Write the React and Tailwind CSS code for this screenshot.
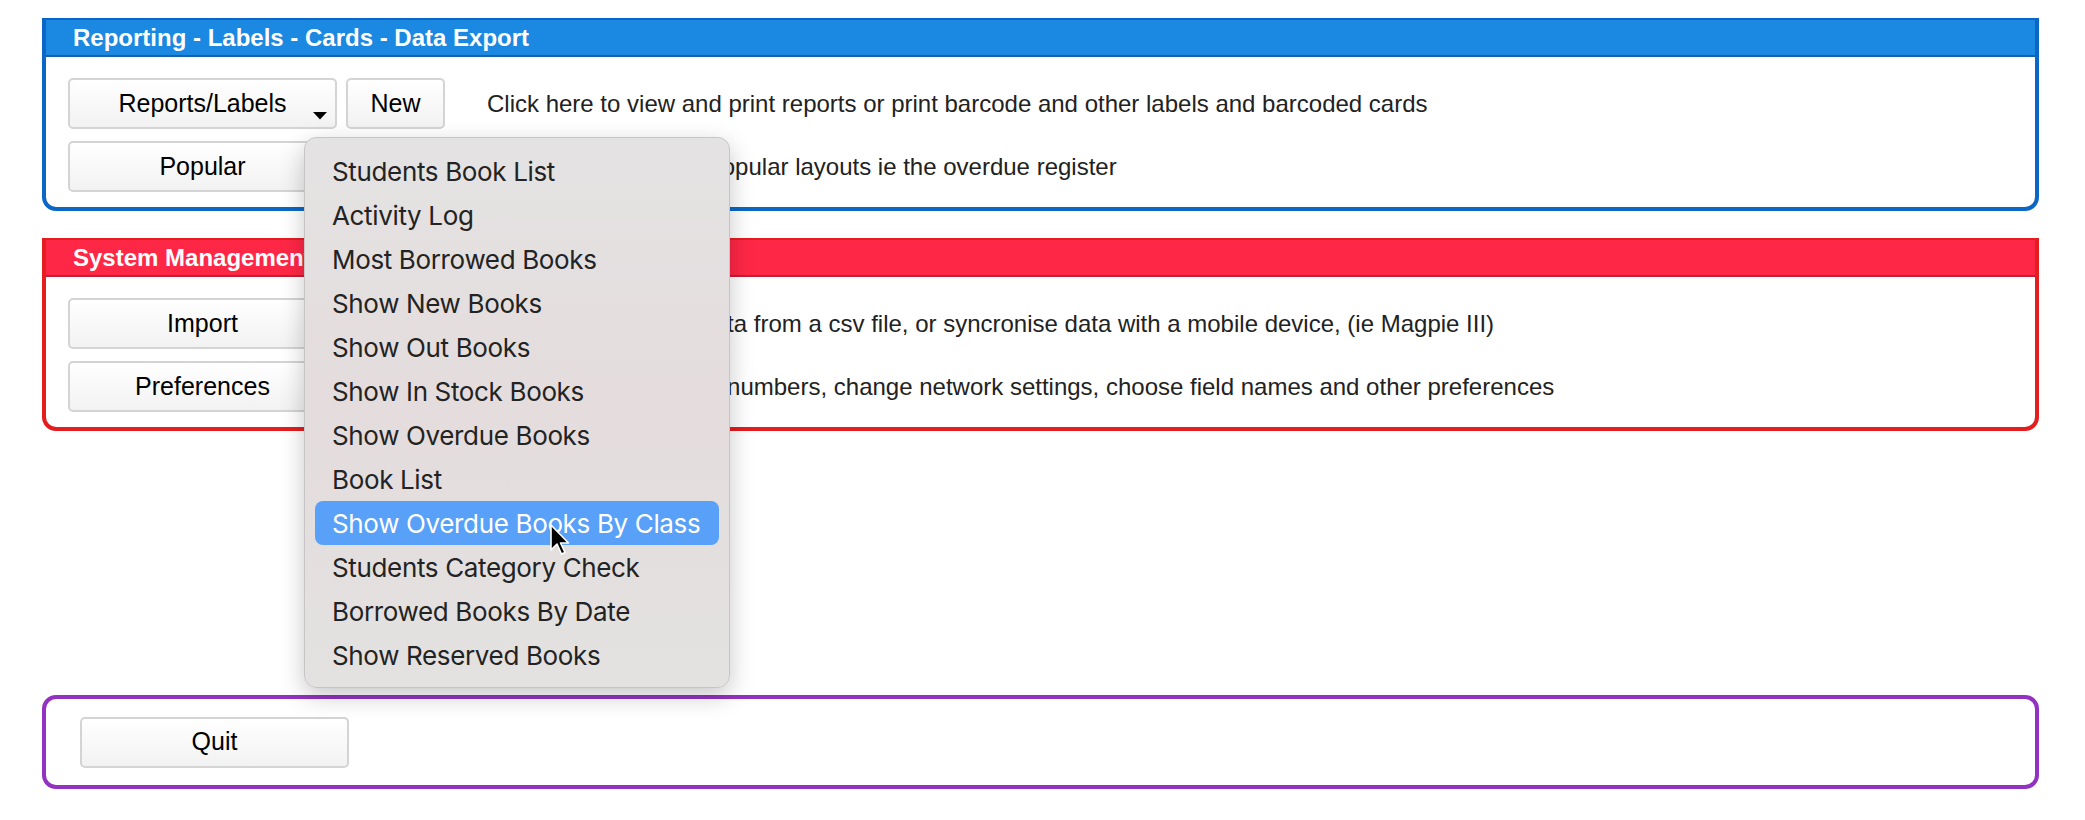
import React from "react";

const items = [
  "Students Book List",
  "Activity Log",
  "Most Borrowed Books",
  "Show New Books",
  "Show Out Books",
  "Show In Stock Books",
  "Show Overdue Books",
  "Book List",
  "Show Overdue Books By Class",
  "Students Category Check",
  "Borrowed Books By Date",
  "Show Reserved Books",
];

function Btn({ children, w = "w-[269px]", arrow = false }) {
  return (
    <div
      className={`relative ${w} h-[51px] shrink-0 flex items-center justify-center rounded-[5px] border-2 border-[#d4d4d4] bg-gradient-to-b from-[#ffffff] to-[#f2f2f2] text-[25px] text-black`}
    >
      <span>{children}</span>
      {arrow && (
        <svg
          className="absolute right-[8px] top-[32px]"
          width="14"
          height="8"
          viewBox="0 0 14 8"
        >
          <path d="M0 0 L14 0 L7 7.5 Z" fill="#000" />
        </svg>
      )}
    </div>
  );
}

function Row({ children, text, textClass = "ml-[42px]" }) {
  return (
    <div className="flex items-center">
      {children}
      <span className={`${textClass} text-[24px] text-[#222] whitespace-nowrap`}>{text}</span>
    </div>
  );
}

function Panel({ title, border, header, headerLine, children }) {
  return (
    <div className={`w-[1997px] border-x-4 border-b-4 border-t-2 ${border} rounded-b-[14px] bg-white`}>
      <div
        className={`h-[37px] ${header} border-b-2 ${headerLine} flex items-center pl-[27px] text-white font-bold text-[24px]`}
      >
        {title}
      </div>
      <div className="pt-[21px] pb-[15px] pl-[22px] flex flex-col gap-[12px]">{children}</div>
    </div>
  );
}

export default function App() {
  return (
    <div
      className="relative w-[2085px] h-[820px] bg-white overflow-hidden pt-[18px] pl-[42px]"
      style={{ fontFamily: '"Liberation Sans", Arial, sans-serif' }}
    >
      <Panel
        title="Reporting - Labels - Cards - Data Export"
        border="border-[#0b67c6]"
        header="bg-[#1b89e1]"
        headerLine="border-[#1462a8]"
      >
        <div className="flex items-center">
          <Btn arrow>Reports/Labels</Btn>
          <div className="ml-[9px]">
            <Btn w="w-[99px]">New</Btn>
          </div>
          <span className="ml-[42px] text-[24px] text-[#222] whitespace-nowrap">
            Click here to view and print reports or print barcode and other labels and barcoded cards
          </span>
        </div>
        <Row text="Click here to access popular layouts ie the overdue register" textClass="ml-[150px]">
          <Btn>Popular</Btn>
        </Row>
      </Panel>

      <div className="mt-[27px]">
        <Panel
          title="System Management - Import - Preferences"
          border="border-[#e41d1f]"
          header="bg-[#ff2746]"
          headerLine="border-[#c21f37]"
        >
          <Row text="Click here to import data from a csv file, or syncronise data with a mobile device, (ie Magpie III)" textClass="ml-[150px]">
            <Btn>Import</Btn>
          </Row>
          <Row text="Click here to set class numbers, change network settings, choose field names and other preferences" textClass="ml-[150px]">
            <Btn>Preferences</Btn>
          </Row>
        </Panel>
      </div>

      <div className="mt-[264px] w-[1997px] h-[94px] border-4 border-[#9332c1] rounded-[14px] bg-white flex items-center pl-[34px]">
        <Btn w="w-[269px]">Quit</Btn>
      </div>

      {/* Dropdown menu overlay */}
      <div
        className="absolute left-[304px] top-[137px] w-[426px] h-[551px] rounded-[12px] border border-[#c6c4c4] bg-gradient-to-b from-[#e4e3e3] via-[#e4dcdd] to-[#e3e2e1] shadow-[0_8px_24px_rgba(0,0,0,0.22)] pt-[11px] px-[10px]"
        style={{ fontFamily: 'Inter, "Noto Sans", sans-serif' }}
      >
        {items.map((it, i) => (
          <div
            key={it}
            className={`h-[44px] flex items-center pl-[17px] rounded-[8px] text-[26px] tracking-[-0.35px] whitespace-nowrap ${
              i === 8 ? "bg-[#58a0f8] text-white" : "text-[#232323]"
            }`}
          >
            {it}
          </div>
        ))}
      </div>

      {/* Cursor */}
      <svg
        className="absolute left-[549px] top-[523px]"
        width="24"
        height="34"
        viewBox="0 0 24 34"
      >
        <path
          d="M2 2 L2 27 L8 21 L12.5 31 L16 29.5 L11.5 20 L19.5 20 Z"
          fill="#000"
          stroke="#fff"
          strokeWidth="1.6"
          strokeLinejoin="round"
        />
      </svg>
    </div>
  );
}
